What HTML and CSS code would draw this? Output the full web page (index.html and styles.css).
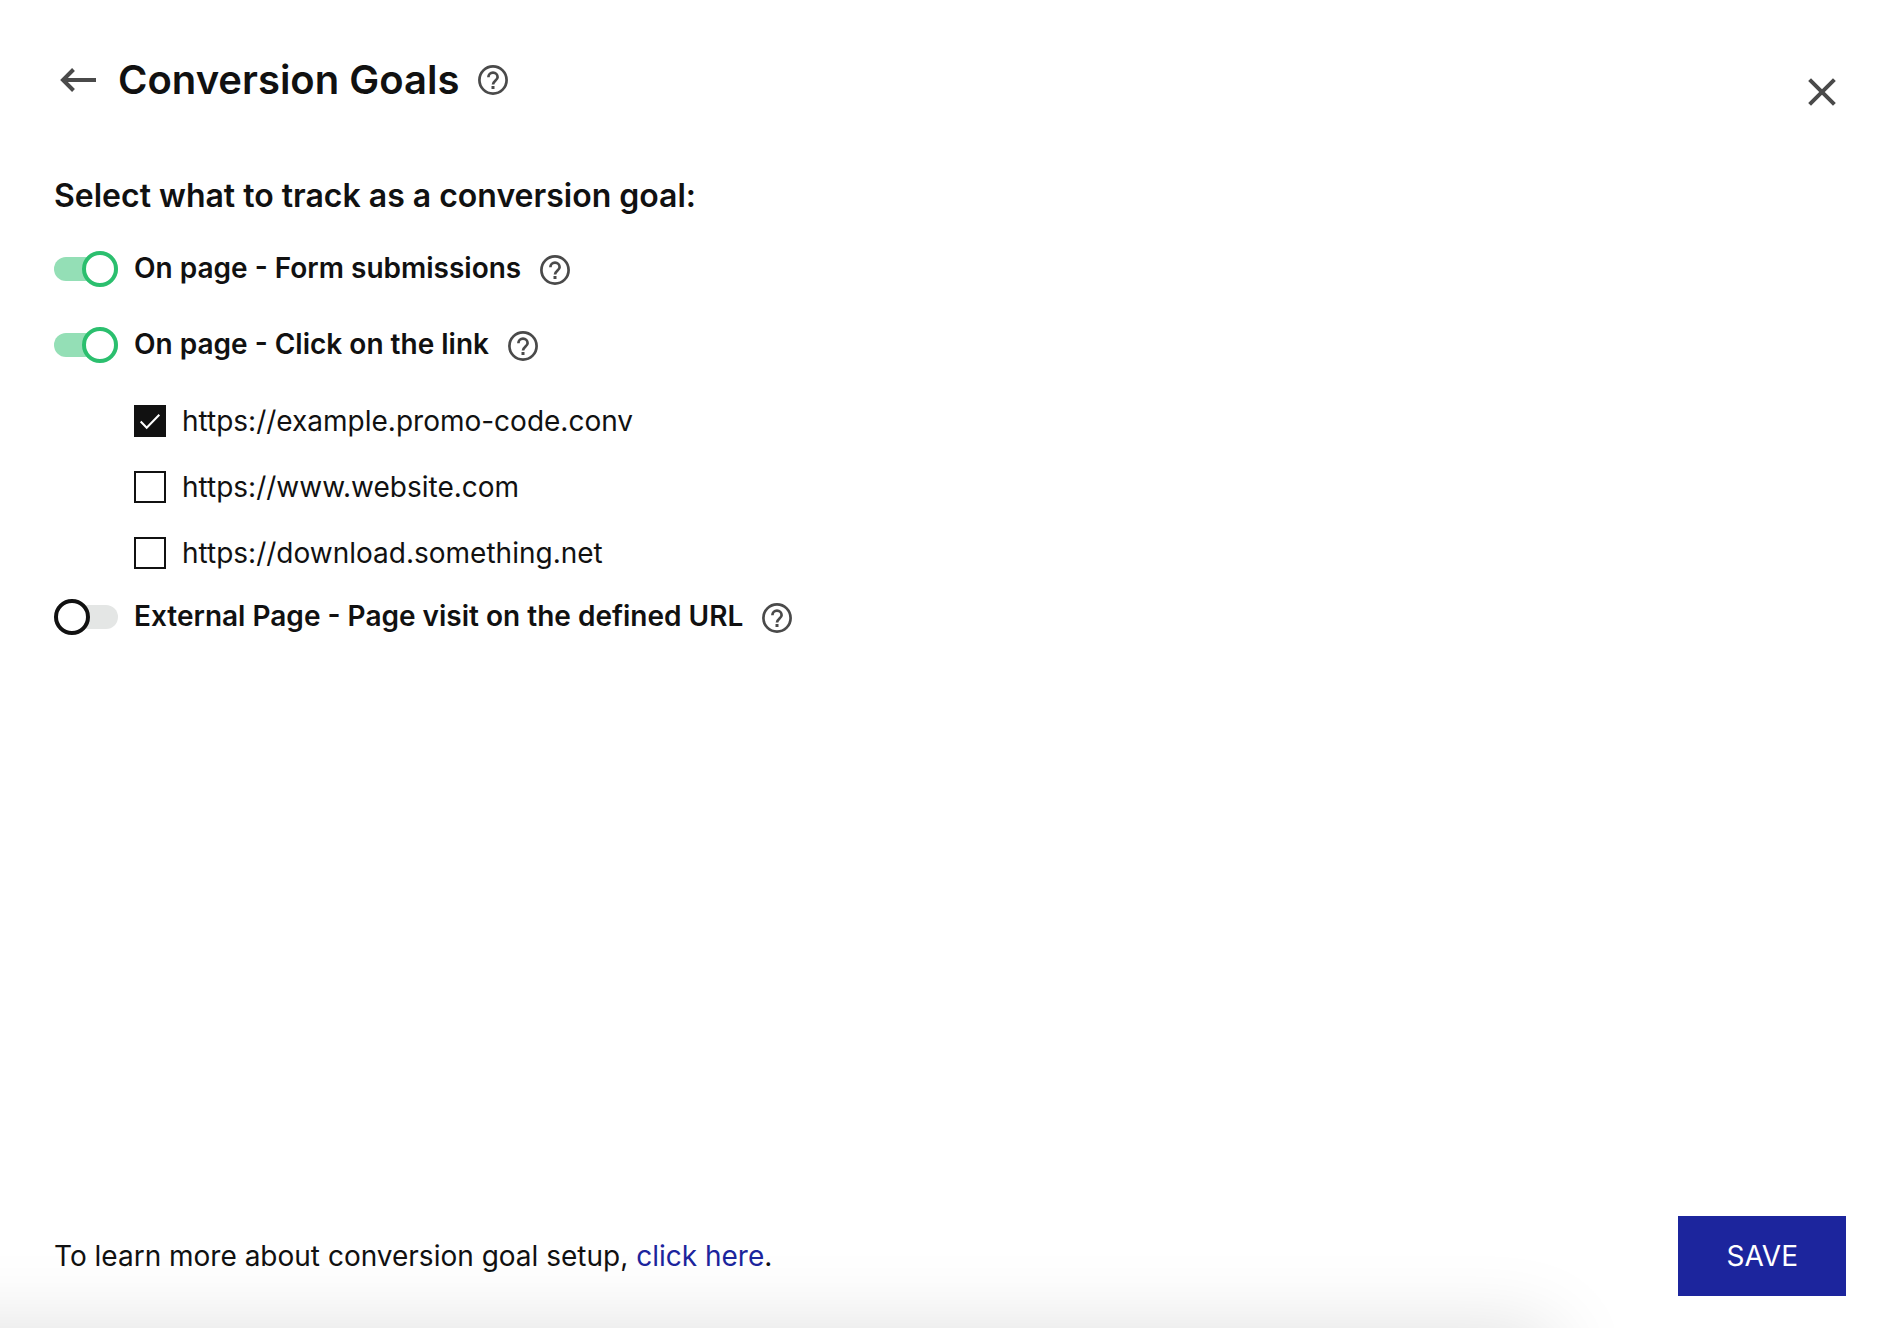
FILE: index.html
```
<!DOCTYPE html>
<html lang="en">
<head>
    <meta charset="UTF-8">
    <meta name="viewport" content="width=device-width, initial-scale=1.0">
    <title>Conversion Goals</title>
    <link rel="stylesheet" href="styles.css">
</head>
<body>
    <svg class="symbols" aria-hidden="true">
        <symbol id="icon-help" viewBox="0 0 30 30">
            <circle cx="15" cy="15" r="13.6" fill="none" stroke="currentColor" stroke-width="2.7"/>
            <path d="M10.4 12.2a4.6 4.6 0 0 1 9.2 0c0 3-4.6 3.6-4.6 7.4" fill="none" stroke="currentColor" stroke-width="2.7"/>
            <rect x="13.5" y="21" width="3" height="3" fill="currentColor"/>
        </symbol>
    </svg>

    <main class="page">
        <header class="page-header">
            <button type="button" class="icon-button back-button" aria-label="Back">
                <svg width="36" height="24" viewBox="0 0 36 24" fill="none" stroke="currentColor" stroke-width="4">
                    <path d="M36 12H3M13.5 1.5L3 12l10.5 10.5"/>
                </svg>
            </button>
            <h1>Conversion Goals</h1>
            <button type="button" class="icon-button help" aria-label="Help">
                <svg width="30" height="30"><use href="#icon-help"/></svg>
            </button>
            <button type="button" class="icon-button close-button" aria-label="Close">
                <svg width="28" height="28" viewBox="0 0 28 28" fill="none" stroke="currentColor" stroke-width="4">
                    <path d="M1.6 1.6l24.8 24.8M26.4 1.6L1.6 26.4"/>
                </svg>
            </button>
        </header>

        <h2>Select what to track as a conversion goal:</h2>

        <div class="goal">
            <input type="checkbox" class="toggle" id="goal-form" checked>
            <label for="goal-form">On page - Form submissions</label>
            <button type="button" class="icon-button help" aria-label="Help">
                <svg width="30" height="30"><use href="#icon-help"/></svg>
            </button>
        </div>

        <div class="goal">
            <input type="checkbox" class="toggle" id="goal-link" checked>
            <label for="goal-link">On page - Click on the link</label>
            <button type="button" class="icon-button help" aria-label="Help">
                <svg width="30" height="30"><use href="#icon-help"/></svg>
            </button>
        </div>

        <ul class="links">
            <li>
                <input type="checkbox" class="checkbox" id="link-1" checked>
                <label for="link-1">https://example.promo-code.conv</label>
            </li>
            <li>
                <input type="checkbox" class="checkbox" id="link-2">
                <label for="link-2">https://www.website.com</label>
            </li>
            <li>
                <input type="checkbox" class="checkbox" id="link-3">
                <label for="link-3">https://download.something.net</label>
            </li>
        </ul>

        <div class="goal">
            <input type="checkbox" class="toggle" id="goal-external">
            <label for="goal-external">External Page - Page visit on the defined URL</label>
            <button type="button" class="icon-button help" aria-label="Help">
                <svg width="30" height="30"><use href="#icon-help"/></svg>
            </button>
        </div>

        <footer class="page-footer">
            <p>To learn more about conversion goal setup, <a href="#">click here</a>.</p>
            <button type="button" class="save-button">SAVE</button>
        </footer>
    </main>
</body>
</html>
```

FILE: styles.css
```
*,
*::before,
*::after {
    box-sizing: border-box;
    margin: 0;
    padding: 0;
}

body {
    font-family: Inter, "Liberation Sans", sans-serif;
    font-size: 28px;
    line-height: 36px;
    color: #111;
    background-color: #fff;
}

/* soft shadow rising from below the window */
body::after {
    content: "";
    position: fixed;
    top: 100%;
    left: -100px;
    right: 18%;
    height: 200px;
    box-shadow: 0 0 80px rgba(0, 0, 0, 0.13);
    pointer-events: none;
}

.symbols {
    display: none;
}

.page {
    display: flex;
    flex-direction: column;
    min-height: 100vh;
    padding: 56px 48px 32px 54px;
}

.icon-button {
    display: flex;
    align-items: center;
    justify-content: center;
    border: none;
    background: none;
    color: #4a4a4a;
    cursor: pointer;
}

.page-header {
    display: flex;
    align-items: flex-start;
    margin-bottom: 60px;
}

.back-button {
    width: 48px;
    height: 48px;
    margin-right: 16px;
}

h1 {
    font-size: 40px;
    line-height: 48px;
    font-weight: 600;
}

.help {
    height: 36px;
    padding-top: 2px;
    margin-left: 19px;
}

.page-header .help {
    height: 48px;
    padding-top: 0;
}

.close-button {
    width: 48px;
    height: 48px;
    margin-top: 12px;
    margin-left: auto;
}

h2 {
    font-size: 32px;
    line-height: 40px;
    font-weight: 600;
    margin-bottom: 35px;
}

.goal {
    display: flex;
    align-items: center;
    height: 36px;
    margin-bottom: 40px;
}

.goal label {
    padding-bottom: 2px;
    font-weight: 600;
}

.toggle {
    appearance: none;
    display: grid;
    align-items: center;
    flex: none;
    width: 64px;
    height: 36px;
    margin-right: 16px;
    cursor: pointer;
}

.toggle::before,
.toggle::after {
    content: "";
    grid-area: 1 / 1;
}

.toggle::before {
    height: 24px;
    border-radius: 12px;
    background-color: #e4e6e5;
}

.toggle::after {
    width: 36px;
    height: 36px;
    border: 4px solid #111;
    border-radius: 50%;
    background-color: #fff;
}

.toggle:checked::before {
    background-color: #94dfb6;
}

.toggle:checked::after {
    justify-self: end;
    border-color: #2bbf6e;
}

.links {
    display: flex;
    flex-direction: column;
    gap: 30px;
    padding-left: 80px;
    margin-bottom: 28px;
    list-style: none;
}

.links li {
    display: flex;
    align-items: center;
    gap: 16px;
}

.checkbox {
    appearance: none;
    flex: none;
    width: 32px;
    height: 32px;
    border: 2px solid #111;
    cursor: pointer;
}

.checkbox:checked {
    background: #111 url("data:image/svg+xml,%3Csvg xmlns='http://www.w3.org/2000/svg' viewBox='0 0 28 28' fill='none' stroke='white' stroke-width='2'%3E%3Cpath d='M4.7 14.5l6 6.3L23.3 7.7'/%3E%3C/svg%3E") center / 28px no-repeat;
}

.page-footer {
    display: flex;
    align-items: center;
    justify-content: space-between;
    margin-top: auto;
}

a {
    color: #1c259d;
    text-decoration: none;
}

.save-button {
    height: 80px;
    padding: 0 48px;
    border: none;
    background-color: #1c259d;
    color: #fff;
    font: inherit;
    cursor: pointer;
}
```
